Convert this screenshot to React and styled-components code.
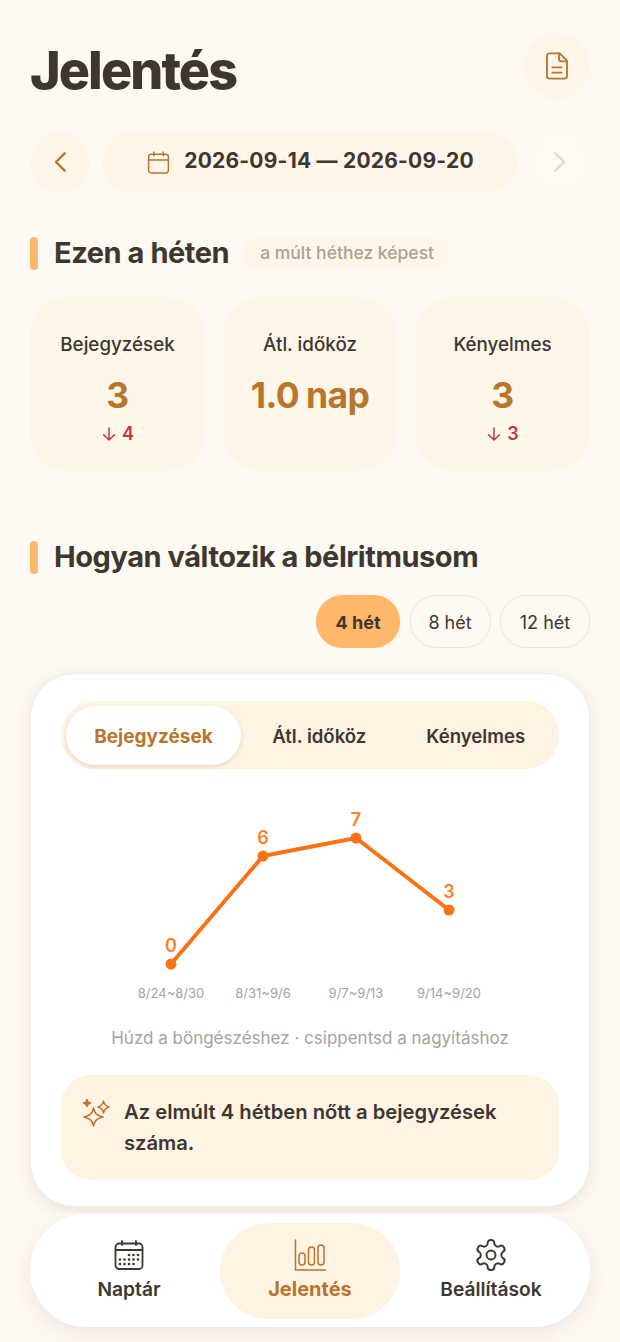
import styled, { createGlobalStyle } from 'styled-components'

const GlobalStyle = createGlobalStyle`
    html, body {
        margin: 0;
        padding: 0;
        background: #fff9f3;
    }

    body {
        font-family: Inter, "Noto Sans", sans-serif;
        color: #3d3730;
    }

    * {
        box-sizing: border-box;
    }
`

const Page = styled.div`
    position: relative;
    width: 620px;
    height: 1342px;
    overflow: hidden;
    padding: 33px 30px 0;
`

const Header = styled.header`
    display: flex;
    justify-content: space-between;
    align-items: center;
    height: 66px;
`

const PageTitle = styled.h1`
    margin: 10px 0 0;
    font-size: 52px;
    line-height: 66px;
    font-weight: 800;
    letter-spacing: -1.9px;
`

const RoundButton = styled.div`
    display: flex;
    align-items: center;
    justify-content: center;
    flex: none;
    width: ${p => p.size}px;
    height: ${p => p.size}px;
    border-radius: 50%;
    background-color: ${p => p.$muted ? '#fffaf4' : '#fff5e8'};
    color: ${p => p.$muted ? '#ecd9bf' : '#b8762d'};
`

const DateRow = styled.div`
    display: flex;
    align-items: center;
    gap: 12px;
    margin-top: 33px;
`

const DatePill = styled.div`
    flex: 1;
    display: flex;
    align-items: center;
    justify-content: center;
    gap: 13px;
    height: 60px;
    border-radius: 30px;
    background-color: #fff5e8;
    color: #b8762d;
`

const DateText = styled.span`
    padding-bottom: 4px;
    font-size: 21px;
    font-weight: 700;
    color: #3d3730;
    letter-spacing: 0.22px;
`

const SectionHead = styled.div`
    display: flex;
    align-items: center;
    height: 33px;
    margin-top: ${p => p.$top}px;
`

const AccentBar = styled.div`
    width: 8px;
    height: 33px;
    border-radius: 4px;
    background-color: #ffb76b;
`

const SectionTitle = styled.h2`
    margin: 0 0 2px 16px;
    font-size: 29px;
    font-weight: 700;
    letter-spacing: -0.45px;
`

const CompareBadge = styled.span`
    margin: 0 0 1px 14px;
    padding: 0 14px 0 17px;
    height: 31px;
    border-radius: 16px;
    background-color: #fff5e8;
    color: #a8a299;
    font-size: 17.5px;
    font-weight: 500;
    line-height: 30px;
`

const StatGrid = styled.div`
    display: grid;
    grid-template-columns: 175px 174px 175px;
    gap: 18px;
    margin-top: 27px;
`

const StatCard = styled.div`
    display: flex;
    flex-direction: column;
    align-items: center;
    height: 174px;
    padding-top: 37px;
    border-radius: 38px;
    background-color: #fff6ea;
`

const StatLabel = styled.div`
    font-size: 18.8px;
    line-height: 22px;
    font-weight: 500;
`

const StatValue = styled.div`
    margin-top: 19px;
    font-size: 35.5px;
    line-height: 42px;
    font-weight: 700;
    color: #b8762d;
    letter-spacing: -0.6px;
    word-spacing: -1px;
`

const StatDelta = styled.div`
    display: flex;
    align-items: center;
    gap: 5px;
    margin-top: 6px;
    font-size: 18px;
    line-height: 22px;
    font-weight: 600;
    color: #c0393b;
`

const RangeRow = styled.div`
    display: flex;
    justify-content: flex-end;
    gap: 9.5px;
    margin-top: 21px;
`

const RangeChip = styled.div`
    display: flex;
    align-items: center;
    justify-content: center;
    width: ${p => p.width}px;
    height: 53px;
    padding-top: 2px;
    border-radius: 26px;
    border: 1px solid ${p => p.$active ? '#ffb76b' : '#eae6e0'};
    background-color: ${p => p.$active ? '#ffb76b' : 'transparent'};
    font-size: 18px;
    font-weight: ${p => p.$active ? 700 : 400};
`

const ChartCard = styled.section`
    height: 534px;
    margin-top: 25px;
    padding: 27px 30px 0;
    border: 1px solid #efedea;
    border-radius: 44px;
    background-color: #fff;
    box-shadow: 0 4px 14px rgba(90, 70, 40, 0.12);
`

const Tabs = styled.div`
    display: grid;
    grid-template-columns: 175px 1fr 1fr;
    align-items: center;
    height: 68px;
    padding: 0 5px;
    border-radius: 34px;
    background-color: #fff3e4;
`

const Tab = styled.div`
    display: flex;
    align-items: center;
    justify-content: center;
    height: 59px;
    padding-top: 2px;
    border-radius: 30px;
    font-size: ${p => p.$active ? 19 : 18.6}px;
    font-weight: ${p => p.$active ? 700 : 600};
    color: ${p => p.$active ? '#b8762d' : '#3d3730'};
    background-color: ${p => p.$active ? '#fff' : 'transparent'};
    box-shadow: ${p => p.$active ? '0 2px 5px rgba(150, 110, 60, 0.2)' : 'none'};
`

const ChartSvg = styled.svg`
    display: block;
    margin-top: 28px;
`

const PointValue = styled.text`
    font-family: Inter, sans-serif;
    font-size: 18px;
    font-weight: 600;
    fill: #f4832a;
    text-anchor: middle;
`

const AxisLabel = styled.text`
    font-family: Inter, sans-serif;
    font-size: 13px;
    fill: #a8a29e;
    text-anchor: middle;
`

const ChartHint = styled.p`
    margin: 25px 0 0;
    text-align: center;
    font-size: 17px;
    line-height: 22px;
    color: #a8a29e;
`

const InsightBox = styled.div`
    display: flex;
    gap: 13px;
    height: 105px;
    margin-top: 26px;
    padding: 21px 20px 0;
    border-radius: 30px;
    background-color: #fff3e4;
    color: #b8762d;
`

const InsightText = styled.p`
    margin: 0;
    font-size: 20.2px;
    line-height: 31px;
    font-weight: 600;
    color: #3d3730;
`

const SparkleSvg = styled.svg`
    flex: none;
    margin-top: 1px;
`

const NavBackdrop = styled.div`
    position: absolute;
    left: 0;
    right: 0;
    bottom: 0;
    height: 129px;
    padding: 1px 30px 0;
    background-color: #fff9f3;
`

const BottomNav = styled.nav`
    display: grid;
    grid-template-columns: 182px 180px 182px;
    align-items: center;
    height: 113px;
    padding: 0 8px;
    border-radius: 57px;
    background-color: #fff;
    box-shadow: 0 6px 18px rgba(90, 70, 40, 0.1);
`

const NavItem = styled.div`
    display: flex;
    flex-direction: column;
    align-items: center;
    height: 96px;
    padding-top: 16px;
    border-radius: 48px;
    background-color: ${p => p.$active ? '#fff3e4' : 'transparent'};
    color: ${p => p.$active ? '#b8762d' : '#3d3730'};
`

const NavIconSlot = styled.div`
    display: flex;
    align-items: center;
    justify-content: center;
    height: 32px;
`

const NavLabel = styled.span`
    margin-top: 5px;
    font-size: ${p => p.$active ? 20 : 19.2}px;
    line-height: 26px;
    font-weight: ${p => p.$active ? 700 : 600};
`

const Icon = ({ size = 24, stroke = 1.8, children }) => (
    <svg width={size} height={size} viewBox="0 0 24 24" fill="none" stroke="currentColor" strokeWidth={stroke} strokeLinecap="round" strokeLinejoin="round">
        {children}
    </svg>
)

const FileIcon = () => (
    <Icon size={32} stroke={1.4}>
        <path d="M6.5 2.5h7.5l5.5 5.5v11.500a2 2 0 0 1-2 2h-11a2 2 0 0 1-2-2v-15a2 2 0 0 1 2-2z" />
        <path d="M13.500 2.500v4a2 2 0 0 0 2 2h4" />
        <path d="M8.500 13h7M8.500 17h7" />
    </Icon>
)

const ChevronLeft = () => (
    <Icon size={32} stroke={1.8}><path d="M15.500 5.500L9 12l6.500 6.500" /></Icon>
)

const ChevronRight = () => (
    <Icon size={32} stroke={1.8}><path d="M8.500 5.500L15 12l-6.500 6.500" /></Icon>
)

const CalendarIcon = () => (
    <Icon size={25} stroke={1.4}>
        <rect x="2.500" y="4" width="19" height="18" rx="2.500" />
        <path d="M2.500 9.500h19M7.500 2v3.500M16.500 2v3.500" />
    </Icon>
)

const ArrowDown = () => (
    <Icon size={16} stroke={2.2}><path d="M12 3v18M4 13l8 8 8-8" /></Icon>
)

const SparkleIcon = () => (
    <SparkleSvg width="30" height="30" viewBox="0 0 30 30" fill="none" stroke="currentColor" strokeWidth="1.500" strokeLinejoin="round">
        <path d="M12.500 11c.9 5.200 3.200 7.500 9.500 9-6.300 1.500-8.600 3.800-9.500 9-.9-5.200-3.200-7.500-9.500-9 6.300-1.500 8.600-3.800 9.500-9z" />
        <path d="M22.500 4c.5 3.200 1.800 4.800 5.500 6-3.700 1.200-5 2.800-5.500 6-.5-3.200-1.800-4.800-5.500-6 3.700-1.200 5-2.800 5.500-6z" />
        <path d="M6 2.500c.3 2 1.200 3 3.500 3.500-2.300.5-3.200 1.500-3.500 3.500-.3-2-1.200-3-3.500-3.500 2.300-.5 3.200-1.500 3.500-3.500z" fill="currentColor" />
    </SparkleSvg>
)

const NavCalendarIcon = () => (
    <svg width="30" height="30" viewBox="0 0 30 30" fill="none" stroke="currentColor" strokeWidth="1.800" strokeLinecap="round">
        <rect x="1.500" y="3.500" width="27" height="25.500" rx="3.500" />
        <path d="M1.500 10h27M8 1v4M22 1v4" />
        <g stroke="none" fill="currentColor">
            {[[15, 15], [19.500, 15], [24, 15], [6, 19.500], [10.500, 19.500], [15, 19.500], [19.500, 19.500], [24, 19.500], [6, 24], [10.500, 24], [15, 24], [19.500, 24]].map(([cx, cy]) => (
                <circle key={`${cx}-${cy}`} cx={cx} cy={cy} r="1.300" />
            ))}
        </g>
    </svg>
)

const NavChartIcon = () => (
    <svg width="32" height="32" viewBox="0 0 32 32" fill="none" stroke="currentColor" strokeWidth="1.500">
        <path d="M1.500 1v30h30" strokeLinecap="round" />
        <rect x="5" y="14" width="6" height="12" rx="3" />
        <rect x="14.500" y="8" width="6" height="18" rx="3" />
        <rect x="24" y="6" width="6" height="20" rx="3" />
    </svg>
)

const GearIcon = () => (
    <Icon size={36} stroke={1.300}>
        <path d="M12.220 2h-.44a2 2 0 0 0-2 2v.18a2 2 0 0 1-1 1.730l-.43.250a2 2 0 0 1-2 0l-.150-.080a2 2 0 0 0-2.730.730l-.220.380a2 2 0 0 0 .730 2.730l.150.100a2 2 0 0 1 1 1.720v.510a2 2 0 0 1-1 1.740l-.150.090a2 2 0 0 0-.730 2.730l.220.380a2 2 0 0 0 2.730.730l.150-.080a2 2 0 0 1 2 0l.430.250a2 2 0 0 1 1 1.730V20a2 2 0 0 0 2 2h.440a2 2 0 0 0 2-2v-.180a2 2 0 0 1 1-1.730l.430-.250a2 2 0 0 1 2 0l.150.080a2 2 0 0 0 2.730-.730l.220-.390a2 2 0 0 0-.730-2.730l-.150-.080a2 2 0 0 1-1-1.740v-.500a2 2 0 0 1 1-1.740l.150-.090a2 2 0 0 0 .730-2.730l-.220-.380a2 2 0 0 0-2.730-.730l-.150.080a2 2 0 0 1-2 0l-.430-.250a2 2 0 0 1-1-1.730V4a2 2 0 0 0-2-2z" />
        <circle cx="12" cy="12" r="3" />
    </Icon>
)

const stats = [
    { label: 'Bejegyzések', value: '3', delta: '4' },
    { label: 'Átl. időköz', value: '1.0 nap' },
    { label: 'Kényelmes', value: '3', delta: '3' },
]

const ranges = [
    { label: '4 hét', width: 84, active: true },
    { label: '8 hét', width: 81 },
    { label: '12 hét', width: 90 },
]

// chart coordinates are relative to the svg, which starts at x=61 y=797 on the page
const points = [
    { x: 110, y: 167, value: 0, range: '8/24~8/30' },
    { x: 202, y: 59, value: 6, range: '8/31~9/6' },
    { x: 295, y: 41, value: 7, range: '9/7~9/13' },
    { x: 388, y: 113, value: 3, range: '9/14~9/20' },
]

export default function App() {
    return (
        <>
            <GlobalStyle />
            <Page>
                <Header>
                    <PageTitle>Jelentés</PageTitle>
                    <RoundButton size={66}><FileIcon /></RoundButton>
                </Header>

                <DateRow>
                    <RoundButton size={60}><ChevronLeft /></RoundButton>
                    <DatePill>
                        <CalendarIcon />
                        <DateText>2026-09-14 — 2026-09-20</DateText>
                    </DatePill>
                    <RoundButton size={60} $muted><ChevronRight /></RoundButton>
                </DateRow>

                <SectionHead $top={45}>
                    <AccentBar />
                    <SectionTitle>Ezen a héten</SectionTitle>
                    <CompareBadge>a múlt héthez képest</CompareBadge>
                </SectionHead>

                <StatGrid>
                    {stats.map(stat => (
                        <StatCard key={stat.label}>
                            <StatLabel>{stat.label}</StatLabel>
                            <StatValue>{stat.value}</StatValue>
                            {stat.delta && <StatDelta><ArrowDown />{stat.delta}</StatDelta>}
                        </StatCard>
                    ))}
                </StatGrid>

                <SectionHead $top={70}>
                    <AccentBar />
                    <SectionTitle>Hogyan változik a bélritmusom</SectionTitle>
                </SectionHead>

                <RangeRow>
                    {ranges.map(range => (
                        <RangeChip key={range.label} width={range.width} $active={range.active}>{range.label}</RangeChip>
                    ))}
                </RangeRow>

                <ChartCard>
                    <Tabs>
                        <Tab $active>Bejegyzések</Tab>
                        <Tab>Átl. időköz</Tab>
                        <Tab>Kényelmes</Tab>
                    </Tabs>

                    <ChartSvg width="497" height="205" viewBox="0 0 497 205">
                        <polyline points={points.map(p => `${p.x},${p.y}`).join(' ')} fill="none" stroke="#f97316" strokeWidth="4" strokeLinejoin="round" />
                        {points.map(p => (
                            <g key={p.range}>
                                <circle cx={p.x} cy={p.y} r="5.500" fill="#f97316" />
                                <PointValue x={p.x} y={p.y - 12}>{p.value}</PointValue>
                                <AxisLabel x={p.x} y="201">{p.range}</AxisLabel>
                            </g>
                        ))}
                    </ChartSvg>

                    <ChartHint>Húzd a böngészéshez · csippentsd a nagyításhoz</ChartHint>

                    <InsightBox>
                        <SparkleIcon />
                        <InsightText>Az elmúlt 4 hétben nőtt a bejegyzések száma.</InsightText>
                    </InsightBox>
                </ChartCard>

                <NavBackdrop>
                    <BottomNav>
                        <NavItem>
                            <NavIconSlot><NavCalendarIcon /></NavIconSlot>
                            <NavLabel>Naptár</NavLabel>
                        </NavItem>
                        <NavItem $active>
                            <NavIconSlot><NavChartIcon /></NavIconSlot>
                            <NavLabel $active>Jelentés</NavLabel>
                        </NavItem>
                        <NavItem>
                            <NavIconSlot><GearIcon /></NavIconSlot>
                            <NavLabel>Beállítások</NavLabel>
                        </NavItem>
                    </BottomNav>
                </NavBackdrop>
            </Page>
        </>
    )
}
